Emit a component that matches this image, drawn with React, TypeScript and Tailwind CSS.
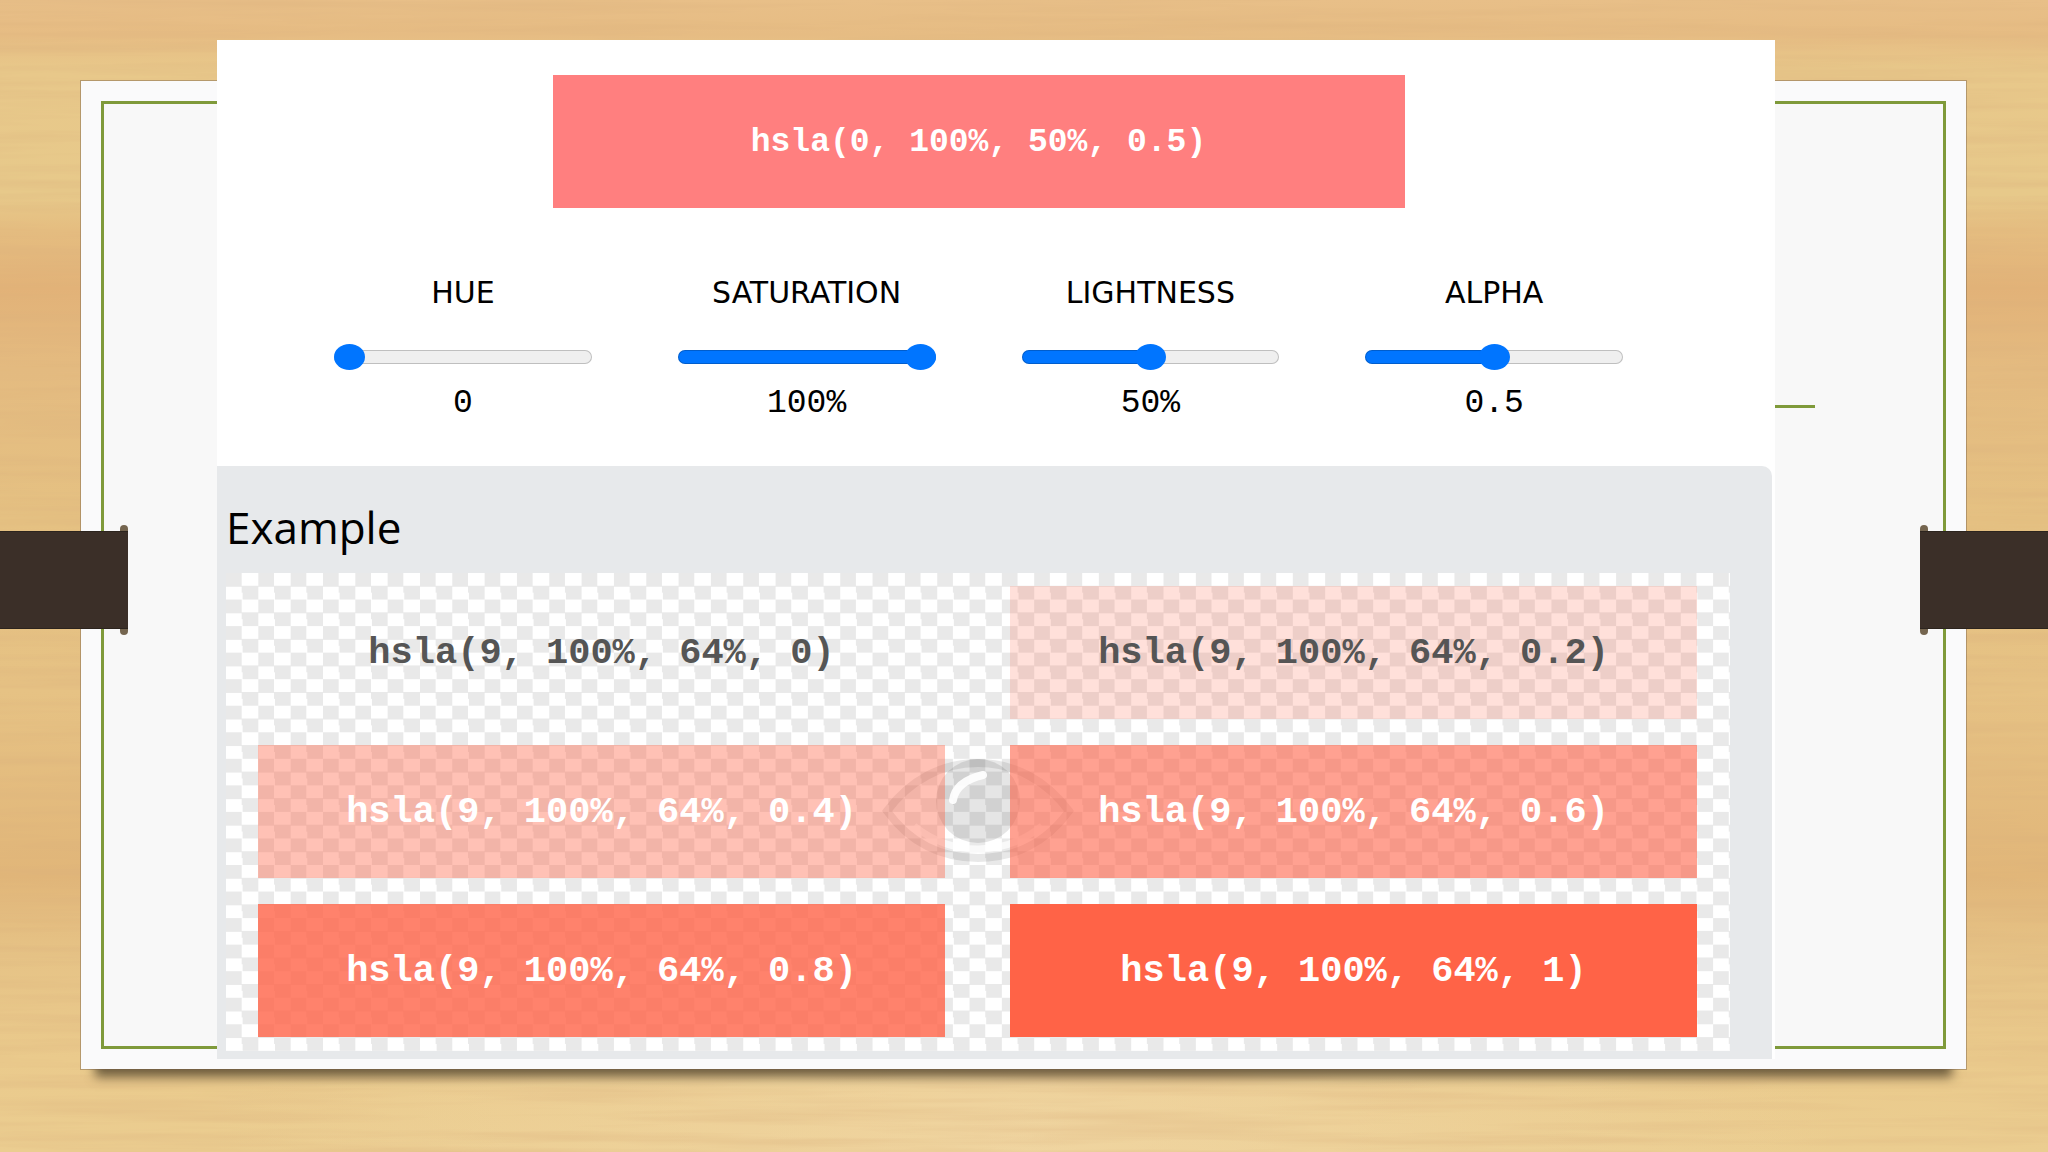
import { useState } from "react";
import type { CSSProperties } from "react";

interface Channel {
  id: "hue" | "saturation" | "lightness" | "alpha";
  label: string;
  max: number;
  step: number;
  unit: string;
}

interface Swatch {
  alpha: number;
  box: string;
}

const channels: Channel[] = [
  { id: "hue", label: "HUE", max: 360, step: 1, unit: "" },
  { id: "saturation", label: "SATURATION", max: 100, step: 1, unit: "%" },
  { id: "lightness", label: "LIGHTNESS", max: 100, step: 1, unit: "%" },
  { id: "alpha", label: "ALPHA", max: 1, step: 0.1, unit: "" },
];

const swatches: Swatch[] = [
  { alpha: 0, box: "text-[#555555]" },
  { alpha: 0.2, box: "bg-[hsla(9,100%,64%,0.2)] text-[#555555]" },
  { alpha: 0.4, box: "bg-[hsla(9,100%,64%,0.4)] text-white" },
  { alpha: 0.6, box: "bg-[hsla(9,100%,64%,0.6)] text-white" },
  { alpha: 0.8, box: "bg-[hsla(9,100%,64%,0.8)] text-white" },
  { alpha: 1, box: "bg-[hsla(9,100%,64%,1)] text-white" },
];

function WoodBackground() {
  return (
    <svg className="absolute inset-0 h-full w-full" preserveAspectRatio="none" aria-hidden="true">
      <defs>
        <linearGradient id="planks" x1="0" y1="0" x2="0" y2="1">
          <stop offset="0" stopColor="#e8bf88" />
          <stop offset="0.03" stopColor="#e6bc83" />
          <stop offset="0.06" stopColor="#e8c88a" />
          <stop offset="0.17" stopColor="#e7c98a" />
          <stop offset="0.2" stopColor="#e5bd80" />
          <stop offset="0.25" stopColor="#e2b278" />
          <stop offset="0.32" stopColor="#e4bb80" />
          <stop offset="0.45" stopColor="#e5c182" />
          <stop offset="0.6" stopColor="#e6c284" />
          <stop offset="0.76" stopColor="#e1b679" />
          <stop offset="0.83" stopColor="#e6c386" />
          <stop offset="0.92" stopColor="#eaca8c" />
          <stop offset="1" stopColor="#ebcd90" />
        </linearGradient>
        <radialGradient id="glow" cx="0.5" cy="1" r="0.4">
          <stop offset="0" stopColor="#f4dcb0" stopOpacity="0.5" />
          <stop offset="1" stopColor="#f4dcb0" stopOpacity="0" />
        </radialGradient>
        <filter id="grain" x="0" y="0" width="100%" height="100%">
          <feTurbulence type="fractalNoise" baseFrequency="0.003 0.09" numOctaves="4" seed="8" />
          <feColorMatrix values="0 0 0 0 0.7  0 0 0 0 0.43  0 0 0 0 0.2  0.7 0 0 0 -0.27" />
        </filter>
      </defs>
      <rect width="100%" height="100%" fill="url(#planks)" />
      <rect width="100%" height="100%" fill="url(#glow)" />
      <rect width="100%" height="100%" filter="url(#grain)" />
    </svg>
  );
}

function Eye() {
  return (
    <svg
      className="absolute left-1/2 top-[185px] h-[106px] w-[192px] -translate-x-1/2"
      viewBox="0 0 192 106"
      fill="none"
      aria-hidden="true"
    >
      <path
        d="M5 53C28 22 60 5 96 5s68 17 91 48c-23 32-55 47-91 47S28 85 5 53Z"
        stroke="#000"
        strokeOpacity="0.09"
        strokeWidth="8"
      />
      <path d="M32 68C52 84 72 91 96 91s44-7 64-23" stroke="#fff" strokeOpacity="0.7" strokeWidth="7" />
      <circle cx="96" cy="43" r="42" fill="#000" fillOpacity="0.1" />
      <path d="M71 42c2-13 13-21 30-25" stroke="#fff" strokeOpacity="0.9" strokeWidth="8" strokeLinecap="round" />
    </svg>
  );
}

function Strap({ side }: { side: "left" | "right" }) {
  const place = side === "left" ? "left-0 items-end" : "right-0 items-start";
  return (
    <div className={`absolute top-[525px] flex w-32 flex-col ${place}`}>
      <span className="h-[6px] w-2 rounded-t-full bg-[#75654f]" />
      <span className="h-[98px] w-full border-y border-[#2c241e] bg-[#3b2f28]" />
      <span className="h-[6px] w-2 rounded-b-full bg-[#75654f]" />
    </div>
  );
}

export default function App() {
  const [values, setValues] = useState({ hue: 0, saturation: 100, lightness: 50, alpha: 0.5 });
  const color = `hsla(${values.hue}, ${values.saturation}%, ${values.lightness}%, ${values.alpha})`;

  return (
    <main className="relative min-h-screen overflow-hidden bg-[#e5c080] pb-20 pl-[81px] pr-[82px] pt-[81px]">
      <WoodBackground />

      {/* Paper */}
      <div className="relative flow-root bg-[#fafafb] pb-[10px] pl-[136px] pr-[191px] shadow-[0_0_0_1px_rgba(120,95,70,0.45),0_22px_10px_-14px_rgba(70,58,36,0.75)]">
        <div className="absolute inset-5 border-[3px] border-[#7f9a3a] bg-[#f8f8f8]" />
        <hr className="absolute inset-x-[151px] top-[324px] border-t-[3px] border-[#7f9a3a]" />

        <div className="relative -mt-[41px]">
          {/* Color picker */}
          <section className="bg-white pb-11 pl-[74px] pr-[109px] pt-[35px]">
            <div
              className="mx-auto flex h-[133px] w-full max-w-[852px] items-center justify-center pt-0.5 font-['Liberation_Mono',monospace] text-[33px] font-bold text-white"
              style={{ backgroundColor: color }}
            >
              {color}
            </div>
            <div className="mt-[65px] grid grid-cols-4">
              {channels.map((channel) => {
                const value = values[channel.id];
                return (
                  <div key={channel.id} className="flex flex-col items-center px-[43px] text-black">
                    <label
                      htmlFor={channel.id}
                      className="font-['DejaVu_Sans',sans-serif] text-[30px] leading-10"
                    >
                      {channel.label}
                    </label>
                    <input
                      id={channel.id}
                      type="range"
                      min={0}
                      max={channel.max}
                      step={channel.step}
                      value={value}
                      onChange={(e) => setValues({ ...values, [channel.id]: Number(e.target.value) })}
                      style={{ "--fill": `${(value / channel.max) * 100}%` } as CSSProperties}
                      className="mt-[31px] h-[26px] w-full appearance-none bg-transparent [&::-webkit-slider-runnable-track]:h-[14px] [&::-webkit-slider-runnable-track]:rounded-full [&::-webkit-slider-runnable-track]:bg-[linear-gradient(to_right,#0075ff_var(--fill),#efefef_var(--fill))] [&::-webkit-slider-runnable-track]:shadow-[inset_0_0_0_1px_rgba(0,0,0,0.2)] [&::-webkit-slider-thumb]:-mt-[6px] [&::-webkit-slider-thumb]:h-[26px] [&::-webkit-slider-thumb]:w-[31px] [&::-webkit-slider-thumb]:appearance-none [&::-webkit-slider-thumb]:rounded-[50%] [&::-webkit-slider-thumb]:bg-[#0075ff]"
                    />
                    <output
                      htmlFor={channel.id}
                      className="mt-4 font-['Liberation_Mono',monospace] text-[33px] leading-9"
                    >
                      {value}
                      {channel.unit}
                    </output>
                  </div>
                );
              })}
            </div>
          </section>

          {/* Example */}
          <div className="bg-[linear-gradient(to_right,#e7e9eb_50%,#ffffff_50%)]">
            <section className="mr-[3px] rounded-tr-[10px] bg-[#e7e9eb] pb-2 pl-[9px] pr-[42px] pt-8">
              <h3 className="font-['Open_Sans',sans-serif] text-[44px] leading-[59px] text-black">Example</h3>
              <div className="relative mt-4 bg-white bg-[conic-gradient(#ffffff_25%,#e9e9e9_0_50%,#ffffff_0_75%,#e9e9e9_0)] bg-[length:2.15%_5.556%] pb-[14px] pl-8 pr-[33px] pt-[13px]">
                <Eye />
                <div className="relative grid grid-cols-2 gap-x-[65px] gap-y-[26px]">
                  {swatches.map((swatch) => (
                    <div
                      key={swatch.alpha}
                      className={`flex h-[133px] items-center justify-center pt-0.5 font-['Liberation_Mono',monospace] text-[37px] font-bold ${swatch.box}`}
                    >
                      {`hsla(9, 100%, 64%, ${swatch.alpha})`}
                    </div>
                  ))}
                </div>
              </div>
            </section>
          </div>
        </div>
      </div>

      <Strap side="left" />
      <Strap side="right" />
    </main>
  );
}
